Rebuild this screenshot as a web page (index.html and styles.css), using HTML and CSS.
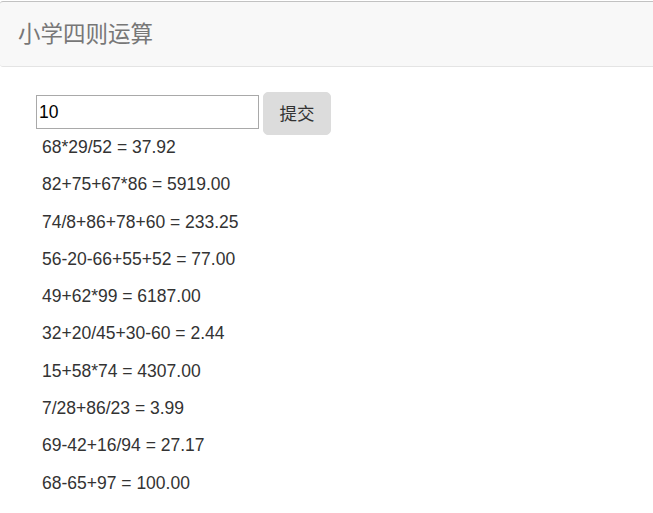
FILE: index.html
```html
<!DOCTYPE html>
<html lang="zh-CN">
  <head>
    <meta charset="UTF-8" />
    <title>小学四则运算</title>
    <link rel="stylesheet" href="styles.css">
  </head>
  <body>
    <nav class="navbar">
      <span class="brand">小学四则运算</span>
    </nav>
    <div class="main">
      <form class="ask">
        <input type="text" class="count" value="10" />
        <button type="button" class="btn">提交</button>
      </form>
      <div class="list">
        <p>68*29/52 = 37.92</p>
        <p>82+75+67*86 = 5919.00</p>
        <p>74/8+86+78+60 = 233.25</p>
        <p>56-20-66+55+52 = 77.00</p>
        <p>49+62*99 = 6187.00</p>
        <p>32+20/45+30-60 = 2.44</p>
        <p>15+58*74 = 4307.00</p>
        <p>7/28+86/23 = 3.99</p>
        <p>69-42+16/94 = 27.17</p>
        <p>68-65+97 = 100.00</p>
      </div>
    </div>
  </body>
</html>
```

FILE: styles.css
```css
body {
  margin: 0;
  font-family: "Liberation Sans", "Noto Sans CJK SC", sans-serif;
  font-size: 17.5px;
  color: #333;
  background: #fff;
}
.navbar {
  margin-top: 1px;
  height: 64px;
  background: #f8f8f8;
  border-top: 1px solid #c2c2c2;
  border-bottom: 1px solid #e4e4e4;
  border-radius: 3px 0 0 3px;
  margin-bottom: 25px;
  display: flex;
  align-items: center;
}
.brand {
  padding-left: 18px;
  font-size: 22.5px;
  color: #777;
  line-height: 25px;
}
.ask {
  display: flex;
  align-items: flex-start;
  gap: 4px;
  padding-left: 36px;
  margin: 0;
}
.count {
  box-sizing: border-box;
  width: 223px;
  height: 34px;
  margin-top: 3px;
  border: 1px solid #a9a9a9;
  padding: 0 2px;
  font-family: inherit;
  font-size: 17.5px;
  color: #000;
}
.btn {
  box-sizing: border-box;
  width: 68px;
  height: 43px;
  background: #dcdcdc;
  border: 1px solid #dcdcdc;
  border-radius: 5px;
  font-family: inherit;
  font-size: 17.5px;
  color: #333;
  padding: 0 0 2px;
}
.list {
  padding-left: 42px;
}
.list p {
  margin: 0 0 12.3px;
  line-height: 25px;
}
```
